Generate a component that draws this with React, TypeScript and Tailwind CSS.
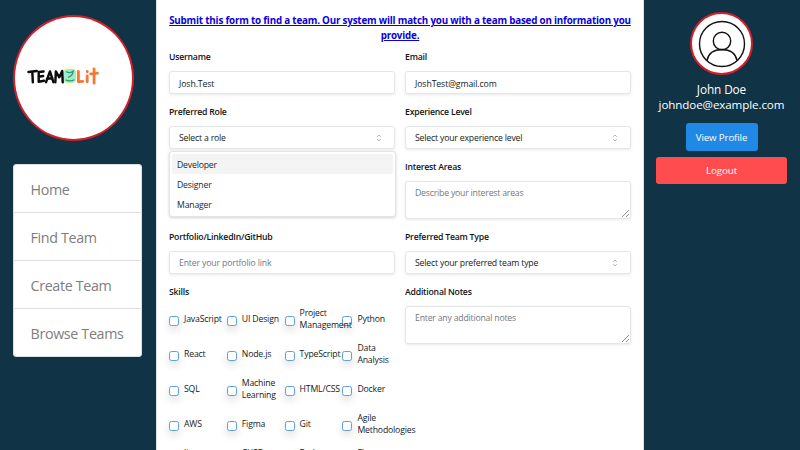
import React from "react";

const NAV = ["Home", "Find Team", "Create Team", "Browse Teams"];

const SKILLS = [
  "JavaScript", "UI Design", "Project Management", "Python",
  "React", "Node.js", "TypeScript", "Data Analysis",
  "SQL", "Machine Learning", "HTML/CSS", "Docker",
  "AWS", "Figma", "Git", "Agile Methodologies",
];

const MORE_SKILLS = ["Jira", "CI/CD", "Redux", "Flutter"];

const FIELD = "w-full rounded-[3px] border border-[#e4e7ea] bg-white px-[9px] shadow-[0_1px_3px_rgba(0,0,0,0.09)]";

function Label({ children }: { children: React.ReactNode }) {
  return (
    <div className="mb-[7px] h-[14px] whitespace-nowrap text-[8.7px] font-semibold leading-[14px] tracking-[-0.22px] text-[#111317]">
      {children}
    </div>
  );
}

function Input({ value, muted }: { value: string; muted?: boolean }) {
  return (
    <div className={`${FIELD} h-[23px] text-[8.7px] ${muted ? "leading-[23px] tracking-[-0.15px] text-[#74777c]" : "leading-[24px] tracking-[-0.1px] text-[#15181c]"}`}>
      {value}
    </div>
  );
}

function Select({ value }: { value: string }) {
  return (
    <div className={`${FIELD} flex h-[23px] items-center justify-between pr-[12px] text-[8.7px] tracking-[-0.18px] text-[#15181c]`}>
      <span className="pt-[2px]">{value}</span>
      <svg width="6" height="8" viewBox="0 0 6 8" fill="none" stroke="#a0a4a8" strokeWidth="0.8">
        <path d="M1.200 2.800 3 1 4.800 2.800M1.200 5.200 3 7 4.800 5.200" />
      </svg>
    </div>
  );
}

function TextArea({ value }: { value: string }) {
  return (
    <div className={`${FIELD} relative h-[38px] pt-[5px] text-[8.7px] leading-[13px] tracking-[-0.2px] text-[#74777c]`}>
      {value}
      <svg className="absolute bottom-0 right-0" width="9" height="9" viewBox="0 0 9 9" stroke="#777" strokeWidth="0.8">
        <path d="M1 8 8 1M5 8 8 5" />
      </svg>
    </div>
  );
}

function RoleMenu() {
  return (
    <div className="absolute left-0 top-[46px] z-10 h-[66px] w-[227px] rounded-[3px] border border-[#e2e5e8] bg-white p-[2px] shadow-[0_1px_3px_rgba(0,0,0,0.18)]">
      {["Developer", "Designer", "Manager"].map((r, i) => (
        <div key={r} className={`h-5 rounded-[2px] px-[5px] text-[8.7px] leading-[22px] tracking-[-0.18px] text-[#25282c] ${i === 0 ? "bg-[#f4f4f4]" : ""}`}>
          {r}
        </div>
      ))}
    </div>
  );
}

function Skill({ name, top }: { name: string; top?: boolean }) {
  return (
    <div className={`flex h-6 w-[58px] ${top ? "items-start" : "items-center"}`}>
      <span className={`size-[10px] shrink-0 rounded-[2.5px] border border-[#5c9fe2] bg-white shadow-[0_4px_8px_rgba(0,0,0,0.14)] ${top ? "mt-[9px]" : "mt-[4px]"}`} />
      <span className="z-[1] ml-[5px] w-[43px] text-[8.7px] leading-[12px] tracking-[-0.17px] text-[#15181c]">{name}</span>
    </div>
  );
}

function Logo() {
  return (
    <svg width="119" height="123" viewBox="0 0 119 123" className="shrink-0">
      <defs>
        <radialGradient id="glow">
          <stop offset="0.4" stopColor="#ffe88a" />
          <stop offset="1" stopColor="#fff6cc" stopOpacity="0" />
        </radialGradient>
      </defs>
      <g transform="translate(0.200 1.500) scale(0.98)">
        <ellipse cx="56.500" cy="59" rx="10" ry="11.500" fill="url(#glow)" />
        <rect x="50.500" y="51.500" width="12.500" height="14" rx="4" fill="#a5ecc6" />
        <path d="M53 54q4 3 8-1M60 54q0 4-5 6M52.500 62.500q4 2.500 9 0" fill="none" stroke="#259b79" strokeWidth="1.300" />
        <g fill="none" strokeLinecap="round" strokeLinejoin="round">
          <g stroke="#0b0b0b" strokeWidth="2.500">
            <path d="M14.500 54.500 23 53.500M18.500 54.500 19 65" />
            <path d="M30 54 25 54.500 25 64.500 30.500 63.500M25 59.500 29.500 58.700" />
            <path d="M32.500 65 36.500 54 40 65M33.500 61.500 39 61" />
            <path d="M42 65 42.500 54 46 60 49 53.500 49.500 65" />
          </g>
          <g stroke="#f47838" strokeWidth="2.900">
            <path d="M65.500 54 65.500 64.500 70 64.200" />
            <path d="M74.500 58.500V64.500M74.500 54V54.300" />
            <path d="M81.500 51.500V66M78 56.500 85 55.800" />
          </g>
        </g>
      </g>
    </svg>
  );
}

export default function App() {
  return (
    <div className="flex h-[450px] w-[800px] overflow-hidden bg-[#103445] font-['Open_Sans','Noto_Sans',sans-serif]">
      <aside className="w-[156px] shrink-0 pl-[12.5px] pt-[15px]">
        <div className="flex h-[126px] w-[121px] items-center justify-center overflow-hidden rounded-[50%] border-2 border-[#d0202a] bg-white">
          <Logo />
        </div>
        <nav className="mt-[23px] h-[193px] w-[129.500px] overflow-hidden rounded-[3px] border border-[#d9dfe2] bg-white">
          {NAV.map((n, i) => (
            <div key={n} className={`h-[48px] whitespace-nowrap pl-[17px] text-[14.3px] leading-[49px] tracking-[-0.35px] text-[#7d7d7d] ${i < 3 ? "border-b border-[#dfdfdf]" : ""}`}>
              {n}
            </div>
          ))}
        </nav>
      </aside>

      <main className="w-[488px] shrink-0 overflow-hidden border-x border-[#dce4ea] bg-white px-[12px] pt-[12px]">
        <h1 className="mb-[8px] h-[30px] whitespace-nowrap text-center text-[9.8px] font-bold leading-[15px] tracking-[-0.19px] text-[#0a00dc] underline">
          <span className="-mx-4 block pt-px">Submit this form to find a team. Our system will match you with a team based on information you</span>
          <span className="block">provide.</span>
        </h1>
        <div className="grid grid-cols-[226px_226px] gap-x-[10px] gap-y-[11px]">
          <div><Label>Username</Label><Input value="Josh.Test" /></div>
          <div><Label>Email</Label><Input value="JoshTest@gmail.com" /></div>
          <div className="relative"><Label>Preferred Role</Label><Select value="Select a role" /><RoleMenu /></div>
          <div><Label>Experience Level</Label><Select value="Select your experience level" /></div>
          <div />
          <div><Label>Interest Areas</Label><TextArea value="Describe your interest areas" /></div>
          <div><Label>Portfolio/LinkedIn/GitHub</Label><Input muted value="Enter your portfolio link" /></div>
          <div><Label>Preferred Team Type</Label><Select value="Select your preferred team type" /></div>
          <div>
            <Label>Skills</Label>
            <div className="mt-[8px] grid grid-cols-[repeat(4,57.8px)] gap-y-[11px]">
              {SKILLS.map((s) => <Skill key={s} name={s} />)}
              {MORE_SKILLS.map((s) => <Skill key={s} name={s} top />)}
            </div>
          </div>
          <div><Label>Additional Notes</Label><TextArea value="Enter any additional notes" /></div>
        </div>
      </main>

      <aside className="flex w-[156px] shrink-0 flex-col items-center pr-px pt-[12px] text-white">
        <div className="flex size-[63px] items-center justify-center rounded-full border-2 border-[#d0202a] bg-white">
          <svg width="48" height="48" viewBox="0 0 48 48" fill="none" stroke="#111" strokeWidth="1.400" className="shrink-0">
            <circle cx="24" cy="24" r="22.500" />
            <circle cx="24" cy="21" r="8.700" />
            <path d="M9 40.500C10.500 33 16 29.500 24 29.500S37.500 33 39 40.500" />
          </svg>
        </div>
        <div className="mt-[6px] whitespace-nowrap text-[11.8px] leading-[16px] tracking-[-0.1px]">John Doe</div>
        <div className="whitespace-nowrap text-[11.6px] leading-[16px] tracking-[-0.1px]">johndoe@example.com</div>
        <div className="mt-[10px] h-[28px] w-[72px] whitespace-nowrap rounded-[3px] bg-[#2088e5] text-center text-[9.7px] leading-[29px] tracking-[-0.12px]">View Profile</div>
        <div className="mt-[6px] h-[27px] w-[131px] rounded-[3px] bg-[#ff4d4f] text-center text-[9.8px] leading-[28px] tracking-[-0.1px]">Logout</div>
      </aside>
    </div>
  );
}
